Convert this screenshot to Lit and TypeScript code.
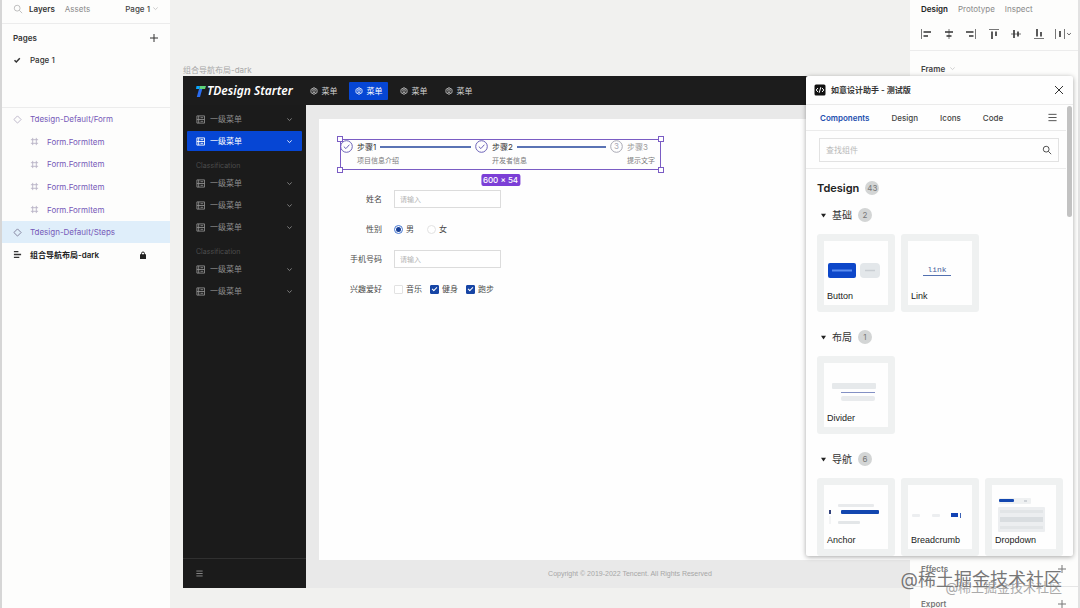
import { LitElement, html, css, svg, nothing } from "lit";
import { customElement, state } from "lit/decorators.js";
import { classMap } from "lit/directives/class-map.js";

const chevron = html`<svg class="chev" viewBox="0 0 8 8"><path d="M1.5 2.8 4 5.2 6.5 2.8" /></svg>`;
const magnifier = html`<svg class="glass" viewBox="0 0 12 12"><circle cx="5" cy="5" r="3.5" /><path d="M7.6 7.6 11 11" /></svg>`;
const plus = html`<svg class="plus" viewBox="0 0 10 10"><path d="M5 1v8M1 5h8" /></svg>`;
const bars = html`<svg class="bars" viewBox="0 0 10 10"><path d="M.5 1.5h9M.5 5h9M.5 8.5h9" /></svg>`;
const diamond = html`<svg class="layer-icon" viewBox="0 0 10 10"><path d="M5 1 9 5 5 9 1 5Z" /></svg>`;
const frameIcon = html`<svg class="layer-icon" viewBox="0 0 10 10"><path d="M3 1v8M7 1v8M1 3h8M1 7h8" /></svg>`;
const alignedList = html`<svg class="layer-icon thick" viewBox="0 0 10 10"><path d="M1 1.8h5M1 5h8M1 8.2h6" /></svg>`;
const server = html`<svg class="server" viewBox="0 0 10 10"><path d="M1 1h8.500v8H1ZM1 5h8.500M3 1v8M5 3h3M5 7h3" /></svg>`;
const cube = html`<svg class="cube" viewBox="0 0 10 10"><path d="M5 .8 8.8 3v4L5 9.2 1.2 7V3ZM3 4.2l2 1.2 2-1.2M3 6.2l2 1.2 2-1.2M3 3.6l2-1.2 2 1.2" /></svg>`;

const alignIcons = [
  svg`<path class="thin" d="M1.5 1v10"/><path d="M3.5 4H11M3.5 8H8"/>`,
  svg`<path class="thin" d="M6 1v10"/><path d="M2 4h8M3.5 8h5"/>`,
  svg`<path class="thin" d="M10.5 1v10"/><path d="M1 4h7.5M4 8h4.500"/>`,
  svg`<path class="thin" d="M1 1.500h10"/><path d="M4 3.500V11M8 3.500V8"/>`,
  svg`<path class="thin" d="M1 6h10"/><path d="M4 2v8M8 3.500v5"/>`,
  svg`<path class="thin" d="M1 10.500h10"/><path d="M4 1v7.500M8 4v4.500"/>`,
  svg`<path class="thin" d="M1.500 1v10M10.500 1v10"/><path d="M6 3v6"/>`,
];

const thumbs = {
  Button: svg`
    <rect x="4" y="22" width="28" height="15" rx="2" fill="#0d47c9"/>
    <path d="M8 29.500h20" stroke="#5b8df0" stroke-width="2"/>
    <rect x="36" y="22" width="20" height="15" rx="4" fill="#e3e7ea"/>
    <path d="M41 29.500h10" stroke="#c9ced3" stroke-width="1.500"/>`,
  Link: svg`
    <text x="29" y="31" text-anchor="middle" class="link-word">link</text>
    <path d="M15 34.500h28" stroke="#5270b0"/>`,
  Divider: svg`
    <rect x="8" y="20" width="44" height="6" rx="1" fill="#e6e9eb"/>
    <path d="M17 29.500h34" stroke="#8390c4"/>
    <rect x="17" y="33" width="34" height="5" rx="2" fill="#e9ebed"/>`,
  Anchor: svg`
    <rect x="5" y="25" width="2" height="4" fill="#33427c"/>
    <path d="M6 31v8" stroke="#e8eaec"/>
    <rect x="14" y="19" width="36" height="3" rx="1" fill="#e8eaec"/>
    <rect x="17" y="25" width="38" height="4" rx="1" fill="#1347b0"/>
    <rect x="14" y="36" width="22" height="3" rx="1" fill="#e3e6e8"/>`,
  Breadcrumb: svg`
    <rect x="4" y="29" width="8" height="3" rx="1" fill="#eceef0"/>
    <rect x="24" y="29" width="8" height="3" rx="1" fill="#eceef0"/>
    <rect x="43" y="28" width="7" height="4" fill="#1243b4"/>
    <rect x="52" y="28" width="1" height="5" fill="#3d62b5"/>`,
  Dropdown: svg`
    <rect x="7" y="13" width="32" height="6" rx="1" fill="#eff1f2"/>
    <rect x="7" y="14" width="15" height="3" rx="1" fill="#1347b0"/>
    <rect x="32" y="15" width="3" height="2" fill="#cfd3d8"/>
    <rect x="6" y="22" width="47" height="25" rx="1" fill="#eceef0"/>
    <rect x="8" y="25" width="43" height="3" fill="#e2e5e7"/>
    <rect x="8" y="32" width="43" height="5" fill="#d9dde0"/>
    <rect x="8" y="41" width="43" height="3" fill="#e2e5e7"/>`,
};

type Thumb = keyof typeof thumbs;

const catalogue: { title: string; count: number; items: Thumb[] }[] = [
  { title: "基础", count: 2, items: ["Button", "Link"] },
  { title: "布局", count: 1, items: ["Divider"] },
  { title: "导航", count: 6, items: ["Anchor", "Breadcrumb", "Dropdown"] },
];

const steps = [
  { title: "步骤1", note: "项目信息介绍", done: true },
  { title: "步骤2", note: "开发者信息", done: true },
  { title: "步骤3", note: "提示文字", done: false },
];

const base = css`
  *,
  *::before,
  *::after {
    box-sizing: border-box;
  }
  button {
    font: inherit;
    color: inherit;
    background: none;
    border: 0;
    padding: 0;
    margin: 0;
    text-align: left;
    cursor: pointer;
  }
  h2,
  h3,
  p,
  ul,
  ol {
    margin: 0;
    padding: 0;
    font-size: inherit;
    list-style: none;
  }
  svg {
    display: block;
    flex: none;
    fill: none;
    stroke: currentColor;
  }
  .chev {
    width: 7px;
    height: 7px;
  }
  .glass {
    width: 10px;
    height: 10px;
  }
  .plus {
    width: 10px;
    height: 10px;
  }
  .bars {
    width: 9px;
    height: 9px;
  }
`;

@customElement("layers-panel")
class LayersPanel extends LitElement {
  static styles = [
    base,
    css`
      :host {
        display: block;
        background: #fdfdfc;
        border-left: 2px solid #d6d6d6;
        color: #333;
      }
      .tabs {
        display: flex;
        align-items: center;
        gap: 10px;
        height: 24px;
        padding: 0 11px 6px;
        border-bottom: 1px solid #ececec;
        color: #8a8a8a;
      }
      .tabs .glass {
        margin-right: -4px;
        color: #b5b5b5;
      }
      .strong {
        font-weight: 600;
        color: #333;
      }
      .page-pick {
        display: flex;
        align-items: center;
        gap: 2px;
        margin-left: auto;
        color: #444;
        font-weight: 500;
      }
      .page-pick .chev {
        color: #c4c4c4;
      }
      .pages {
        height: 84px;
        padding: 3px 11px 0;
        border-bottom: 1px solid #ececec;
      }
      .pages-head {
        display: flex;
        align-items: center;
        justify-content: space-between;
        height: 22px;
      }
      .page {
        display: flex;
        align-items: center;
        gap: 9px;
        height: 22px;
        font-weight: 500;
      }
      .page svg {
        width: 8px;
        height: 8px;
        stroke-width: 1.500;
      }
      .layers {
        display: grid;
        grid-auto-rows: 1fr;
        height: 158px;
      }
      .layer {
        display: flex;
        align-items: center;
        gap: 8px;
        width: 100%;
        height: 100%;
        padding: 0 23px 0 11px;
        color: #7659b8;
      }
      .layer-icon {
        width: 9px;
        height: 9px;
        color: #b9b2c6;
      }
      .nested {
        padding-left: 28px;
      }
      .selected {
        background: #dfeefa;
      }
      .selected .layer-icon {
        color: #7d7a96;
      }
      .root {
        color: #222;
        font-weight: 600;
      }
      .thick {
        color: #333;
        stroke-width: 1.600;
      }
      .lock {
        width: 8px;
        height: 8px;
        margin-left: auto;
      }
    `,
  ];

  render() {
    const children = [0, 1, 2, 3];
    return html`
      <div class="tabs">
        ${magnifier}
        <button class="strong">Layers</button>
        <button>Assets</button>
        <button class="page-pick">Page 1 ${chevron}</button>
      </div>
      <div class="pages">
        <div class="pages-head">
          <h2 class="strong">Pages</h2>
          <button aria-label="Add page">${plus}</button>
        </div>
        <button class="page">
          <svg viewBox="0 0 8 8"><path d="M1.500 4.200 3.300 6 6.800 2.200" /></svg>Page 1
        </button>
      </div>
      <ul class="layers">
        <li><button class="layer">${diamond}Tdesign-Default/Form</button></li>
        ${children.map(() => html`<li><button class="layer nested">${frameIcon}Form.FormItem</button></li>`)}
        <li><button class="layer selected">${diamond}Tdesign-Default/Steps</button></li>
        <li>
          <button class="layer root">
            ${alignedList}组合导航布局-dark
            <svg class="lock" viewBox="0 0 8 8">
              <path d="M2.500 4V2.500a1.500 1.500 0 0 1 3 0V4" />
              <rect x="1.500" y="3.800" width="5" height="3.700" fill="currentColor" />
            </svg>
          </button>
        </li>
      </ul>
    `;
  }
}

@customElement("starter-frame")
class StarterFrame extends LitElement {
  static styles = [
    base,
    css`
      :host {
        display: flex;
        flex-direction: column;
        background: #e9e9e9;
        color: #4a4a4a;
      }
      .top {
        display: flex;
        align-items: center;
        height: 29px;
        padding-left: 12px;
        background: #1c1c1c;
        color: #d0d0d0;
      }
      .brand {
        display: flex;
        align-items: center;
        gap: 1px;
        width: 109px;
        color: #fff;
        font: italic 600 12px/16px "Noto Sans", sans-serif;
        white-space: nowrap;
      }
      .brand svg {
        width: 11px;
        height: 12px;
        stroke: none;
      }
      .nav {
        display: flex;
        gap: 6px;
      }
      .nav button {
        display: flex;
        align-items: center;
        justify-content: center;
        gap: 4px;
        width: 39px;
        height: 18px;
        border-radius: 1px;
      }
      .cube {
        width: 8px;
        height: 8px;
      }
      .nav .on,
      .side .on {
        background: #0646d4;
        color: #fff;
      }
      .main {
        display: flex;
        flex: 1;
      }
      .side {
        display: flex;
        flex-direction: column;
        width: 123px;
        padding: 4px 4px 0;
        background: #1b1b1b;
        color: #8c8c8c;
      }
      .group {
        display: grid;
        gap: 2px;
      }
      .caption {
        height: 14px;
        margin: 8px 9px 0;
        color: #4d4d4d;
        font-size: 7px;
        line-height: 14px;
      }
      .side .item {
        display: flex;
        align-items: center;
        gap: 5px;
        width: 100%;
        height: 20px;
        padding: 0 9px 0 9px;
        border-radius: 1px;
      }
      .side .chev {
        margin-left: auto;
      }
      .server {
        width: 9px;
        height: 9px;
      }
      .fold {
        margin: auto -4px 0;
        padding: 0 13px;
        height: 30px;
        border-top: 1px solid #303030;
        color: #b0b0b0;
      }
      .fold .bars {
        width: 7px;
        height: 7px;
      }
      .work {
        display: flex;
        flex: 1;
        flex-direction: column;
        padding: 14px 12px 0 13px;
      }
      .sheet {
        flex: 1;
        padding: 20px 21px;
        background: #fefefe;
      }
      .foot {
        height: 28px;
        color: #a6a6a6;
        font: 7px/28px "Liberation Sans", sans-serif;
        text-align: center;
      }
      .steps {
        position: relative;
        display: grid;
        grid-template-columns: 135px 135px 1fr;
        width: 321px;
        height: 31px;
        outline: 1px solid #7a5cc4;
        outline-offset: -1px;
      }
      .handle {
        position: absolute;
        width: 6px;
        height: 6px;
        border: 1px solid #7a5cc4;
        background: #fff;
      }
      .nw {
        top: -3px;
        left: -3px;
      }
      .ne {
        top: -3px;
        right: -3px;
      }
      .sw {
        bottom: -3px;
        left: -3px;
      }
      .se {
        bottom: -3px;
        right: -3px;
      }
      .size {
        position: absolute;
        top: 35px;
        left: 50%;
        padding: 0 2px;
        border-radius: 2px;
        background: #7c3fd6;
        color: #fff;
        font-weight: 500;
        line-height: 12px;
        white-space: nowrap;
        transform: translateX(-50%);
      }
      .step-head {
        display: flex;
        align-items: center;
        gap: 4px;
        height: 15px;
        padding-right: 4px;
        color: #333;
      }
      .step-head svg {
        width: 13px;
        height: 13px;
        color: #6b62b8;
      }
      .rail {
        flex: 1;
        height: 2px;
        background: #5a73b4;
      }
      .pending .step-head {
        color: #9a9a9a;
      }
      .pending .step-head svg {
        color: #a9a9b4;
      }
      .digit {
        fill: currentColor;
        stroke: none;
        font-size: 8px;
      }
      .note {
        padding-left: 17px;
        color: #7a7a7a;
        font-size: 7px;
        line-height: 14px;
      }
      form {
        display: grid;
        grid-auto-rows: 30px;
        align-items: center;
        margin-top: 14px;
      }
      .field {
        display: grid;
        grid-template-columns: 42px 1fr;
        column-gap: 12px;
        align-items: center;
      }
      .name {
        text-align: right;
      }
      .text {
        width: 107px;
        height: 18px;
        padding: 0 5px;
        border: 1px solid #dcdcdc;
        background: #fff;
        color: #333;
        font: inherit;
      }
      .text::placeholder {
        color: #b4b4b4;
        font-size: 7px;
      }
      .options {
        display: flex;
        gap: 8px;
      }
      .radios {
        gap: 13px;
      }
      .options label {
        display: flex;
        align-items: center;
        gap: 3px;
      }
      .options input {
        display: grid;
        place-items: center;
        width: 9px;
        height: 9px;
        margin: 0;
        appearance: none;
        border: 1px solid #e2e2e2;
        border-radius: 1px;
        background: #fff;
      }
      .options input[type="radio"] {
        border-radius: 50%;
      }
      .options input[type="radio"]:checked {
        border-color: #4677d0;
      }
      .options input[type="radio"]:checked::after {
        content: "";
        width: 5px;
        height: 5px;
        border-radius: 50%;
        background: #173f96;
      }
      .options input[type="checkbox"]:checked {
        border-color: #1745a5;
        background: #1745a5;
      }
      .options input[type="checkbox"]:checked::after {
        content: "";
        width: 5px;
        height: 3px;
        border: solid #fff;
        border-width: 0 0 1px 1px;
        transform: translateY(-1px) rotate(-45deg);
      }
    `,
  ];

  @state() private active = 1;

  private item(index: number) {
    return html`<button class=${classMap({ item: true, on: index === this.active })} @click=${() => (this.active = index)}>
      ${server}一级菜单${chevron}
    </button>`;
  }

  render() {
    return html`
      <header class="top">
        <div class="brand">
          <svg viewBox="0 0 11 12">
            <path d="M1.500 1H5L4.300 4H1Z" fill="#0aa5ff" />
            <path d="M5 1h6l-1 3H4.300Z" fill="#5ed37a" />
            <path d="M4 4h3.300L5 12H1.800Z" fill="#2a6cf0" />
          </svg>
          TDesign Starter
        </div>
        <nav class="nav">
          ${[0, 1, 2, 3].map((i) => html`<button class=${classMap({ on: i === 1 })}>${cube}菜单</button>`)}
        </nav>
      </header>
      <div class="main">
        <aside class="side">
          <div class="group">${[0, 1].map((i) => this.item(i))}</div>
          <p class="caption">Classification</p>
          <div class="group">${[2, 3, 4].map((i) => this.item(i))}</div>
          <p class="caption">Classification</p>
          <div class="group">${[5, 6].map((i) => this.item(i))}</div>
          <button class="fold" aria-label="Collapse menu">${bars}</button>
        </aside>
        <div class="work">
          <section class="sheet">
            <div class="steps">
              ${steps.map(
                (s, i) => html`<div class=${classMap({ pending: !s.done })}>
                  <div class="step-head">
                    <svg viewBox="0 0 13 13">
                      <circle cx="6.500" cy="6.500" r="5.800" />
                      ${s.done
                        ? svg`<path d="M3.800 6.600 5.900 8.600 9.400 4.700"/>`
                        : svg`<text class="digit" x="6.500" y="9.400" text-anchor="middle">${i + 1}</text>`}
                    </svg>
                    <span>${s.title}</span>
                    ${s.done ? html`<span class="rail"></span>` : nothing}
                  </div>
                  <p class="note">${s.note}</p>
                </div>`
              )}
              ${["nw", "ne", "sw", "se"].map((c) => html`<span class="handle ${c}"></span>`)}
              <span class="size">600 × 54</span>
            </div>
            <form>
              <div class="field">
                <label class="name" for="name">姓名</label>
                <input class="text" id="name" placeholder="请输入" />
              </div>
              <div class="field">
                <span class="name" id="gender">性别</span>
                <div class="options radios" role="radiogroup" aria-labelledby="gender">
                  <label><input type="radio" name="gender" checked />男</label>
                  <label><input type="radio" name="gender" />女</label>
                </div>
              </div>
              <div class="field">
                <label class="name" for="phone">手机号码</label>
                <input class="text" id="phone" placeholder="请输入" />
              </div>
              <div class="field">
                <span class="name" id="hobby">兴趣爱好</span>
                <div class="options" role="group" aria-labelledby="hobby">
                  <label><input type="checkbox" />音乐</label>
                  <label><input type="checkbox" checked />健身</label>
                  <label><input type="checkbox" checked />跑步</label>
                </div>
              </div>
            </form>
          </section>
          <footer class="foot">Copyright © 2019-2022 Tencent. All Rights Reserved</footer>
        </div>
      </div>
    `;
  }
}

@customElement("inspector-panel")
class InspectorPanel extends LitElement {
  static styles = [
    base,
    css`
      :host {
        display: flex;
        flex-direction: column;
        background: #fdfdfc;
        border-right: 2px solid #e2e2e2;
        color: #8a8a8a;
      }
      .tabs {
        display: flex;
        gap: 10px;
        height: 18px;
        align-items: center;
        padding-left: 11px;
      }
      .on {
        color: #222;
        font-weight: 600;
      }
      .align {
        display: flex;
        justify-content: space-between;
        align-items: center;
        height: 33px;
        padding: 0 6px 0 10px;
        border-bottom: 1px solid #ececec;
        color: #333;
      }
      .align button {
        display: flex;
        align-items: center;
      }
      .align button:last-child {
        margin-left: -1px;
      }
      .align svg {
        width: 12px;
        height: 12px;
        stroke-width: 1.600;
      }
      .align .thin {
        stroke-width: 1;
        stroke: #777;
      }
      .align .chev {
        width: 6px;
        height: 6px;
        stroke-width: 1;
      }
      .row {
        display: flex;
        align-items: center;
        justify-content: space-between;
        height: 35px;
        padding: 0 11px;
        color: #777;
        font-weight: 600;
      }
      .frame {
        justify-content: flex-start;
        gap: 4px;
        color: #444;
      }
      .frame .chev {
        color: #ccc;
      }
      .effects {
        margin-top: auto;
        border-bottom: 1px solid #e6e6e6;
      }
      .export {
        height: 21px;
        padding-top: 13px;
      }
    `,
  ];

  render() {
    return html`
      <div class="tabs"><button class="on">Design</button><button>Prototype</button><button>Inspect</button></div>
      <div class="align">
        ${alignIcons.map(
          (icon, i) => html`<button aria-label="Align ${i + 1}">
            <svg viewBox="0 0 12 12">${icon}</svg>${i === 6 ? chevron : nothing}
          </button>`
        )}
      </div>
      <button class="row frame">Frame ${chevron}</button>
      <div class="row effects">Effects ${plus}</div>
      <div class="row export">Export ${plus}</div>
    `;
  }
}

@customElement("assistant-window")
class AssistantWindow extends LitElement {
  static styles = [
    base,
    css`
      :host {
        display: flex;
        flex-direction: column;
        overflow: hidden;
        border-radius: 2px;
        background: #fefefe;
        color: #333;
        box-shadow: 0 1px 5px rgba(0, 0, 0, 0.35);
      }
      .bar {
        display: flex;
        flex: none;
        align-items: center;
        gap: 5px;
        height: 29px;
        padding: 0 9px 0 8px;
        border-bottom: 1px solid #ebebeb;
        font-weight: 600;
      }
      .bar svg {
        width: 12px;
        height: 12px;
      }
      .bar button {
        margin-left: auto;
      }
      .bar button svg {
        width: 10px;
        height: 10px;
      }
      .body {
        display: flex;
        flex: 1;
        min-height: 0;
      }
      .track {
        width: 7px;
        padding: 1px 1px 0;
      }
      .thumb {
        width: 5px;
        height: 111px;
        border-radius: 3px;
        background: #c2c2c2;
      }
      .pane {
        flex: 1;
        min-width: 0;
      }
      .tabs {
        display: flex;
        align-items: center;
        gap: 22px;
        height: 26px;
        padding: 0 9px 0 14px;
        border-bottom: 1px solid #ebebeb;
        color: #444;
        font-weight: 500;
      }
      .tabs .on {
        color: #1c4fae;
        font-weight: 600;
      }
      .tabs .menu {
        margin-left: auto;
      }
      .find {
        display: flex;
        align-items: center;
        height: 24px;
        margin: 7px 7px 6px 13px;
        padding: 0 6px;
        border: 1px solid #e2e2e2;
      }
      .find input {
        flex: 1;
        min-width: 0;
        padding: 0;
        border: 0;
        outline: 0;
        background: none;
        color: #333;
        font: inherit;
      }
      .find input::placeholder {
        color: #b9b9b9;
      }
      .list {
        padding: 11px 0 0 11px;
        border-top: 1px solid #ececec;
      }
      .kit {
        display: flex;
        align-items: center;
        gap: 6px;
        height: 16px;
        color: #222;
        font-size: 11px;
        font-weight: 600;
      }
      .count {
        min-width: 14px;
        height: 14px;
        border-radius: 7px;
        background: #d3d5d5;
        color: #777;
        font-size: 8px;
        font-weight: 400;
        line-height: 14px;
        text-align: center;
      }
      .section {
        display: flex;
        align-items: center;
        gap: 6px;
        width: 100%;
        height: 38px;
        padding-left: 4px;
        font-size: 10px;
      }
      .section svg {
        width: 5px;
        height: 5px;
        fill: #222;
        stroke: none;
      }
      .cards {
        display: flex;
        gap: 6px;
        margin-bottom: 6px;
      }
      .card {
        width: 78px;
        height: 78px;
        border: 7px solid #eff1f1;
        border-radius: 3px;
        color: #222;
        font-family: "Liberation Sans", sans-serif;
      }
      .card svg {
        width: 64px;
        height: 46px;
        overflow: visible;
        stroke: none;
      }
      .label {
        display: block;
        padding-left: 3px;
        font-size: 9px;
        line-height: 18px;
      }
      .link-word {
        fill: #4a5f9c;
        font: 8px "Liberation Mono", monospace;
      }
    `,
  ];

  @state() private tab = "Components";

  render() {
    return html`
      <header class="bar">
        <svg viewBox="0 0 12 12">
          <rect x=".5" y=".5" width="11" height="11" rx="1.500" fill="#111" stroke="none" />
          <path d="M4 4 2.200 6 4 8M8 4l1.800 2L8 8M6.800 3.200 5.200 8.800" stroke="#fff" />
        </svg>
        如意设计助手 - 测试版
        <button aria-label="Close"><svg viewBox="0 0 10 10"><path d="M1 1l8 8M9 1 1 9" /></svg></button>
      </header>
      <div class="body">
        <div class="pane">
          <div class="tabs">
            ${["Components", "Design", "Icons", "Code"].map(
              (t) => html`<button class=${classMap({ on: t === this.tab })} @click=${() => (this.tab = t)}>${t}</button>`
            )}
            <button class="menu" aria-label="Menu">${bars}</button>
          </div>
          <label class="find"><input aria-label="查找组件" placeholder="查找组件" />${magnifier}</label>
          <div class="list">
            <h2 class="kit">Tdesign <span class="count">43</span></h2>
            ${catalogue.map(
              (g) => html`<section>
                <button class="section">
                  <svg viewBox="0 0 6 6"><path d="M0 1h6L3 5.500Z" /></svg>${g.title}<span class="count">${g.count}</span>
                </button>
                <div class="cards">
                  ${g.items.map(
                    (name) => html`<button class="card">
                      <svg viewBox="0 0 64 46">${thumbs[name]}</svg><span class="label">${name}</span>
                    </button>`
                  )}
                </div>
              </section>`
            )}
          </div>
        </div>
        <div class="track"><div class="thumb"></div></div>
      </div>
    `;
  }
}

@customElement("app-root")
class AppRoot extends LitElement {
  static styles = [
    base,
    css`
      :host {
        position: relative;
        display: grid;
        grid-template-columns: 170px 1fr 170px;
        height: 100vh;
        overflow: hidden;
        background: #f1f1ef;
        font: 8px/12px Inter, "Noto Sans CJK SC", sans-serif;
      }
      .canvas {
        position: relative;
        overflow: hidden;
      }
      .artboard {
        position: absolute;
        top: 64px;
        left: 13px;
        width: 770px;
        color: #a8a8a8;
      }
      starter-frame {
        height: 512px;
      }
      assistant-window {
        position: absolute;
        top: 76px;
        right: 7px;
        width: 267px;
        height: 480px;
      }
      .mark {
        position: absolute;
        right: 18px;
        bottom: 16px;
        color: #777;
        font-size: 18px;
        line-height: 24px;
        white-space: nowrap;
        text-shadow: 0 0 1px #fff;
      }
      .echo {
        bottom: 12px;
        color: #aaa;
        font-size: 13px;
        line-height: 18px;
      }
    `,
  ];

  render() {
    return html`
      <layers-panel></layers-panel>
      <main class="canvas">
        <div class="artboard">
          组合导航布局-dark
          <starter-frame></starter-frame>
        </div>
      </main>
      <inspector-panel></inspector-panel>
      <assistant-window></assistant-window>
      <span class="mark echo">@稀土掘金技术社区</span>
      <span class="mark">@稀土掘金技术社区</span>
    `;
  }
}
